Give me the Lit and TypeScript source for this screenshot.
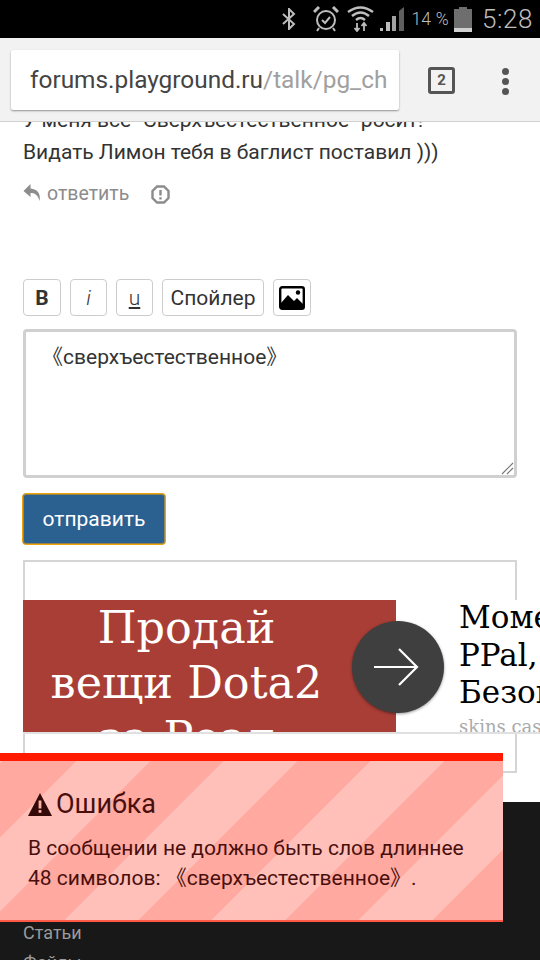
import { LitElement, html, css, svg } from 'lit'
import { customElement } from 'lit/decorators.js'

const warnIcon = svg`<svg class="warn" viewBox="0 0 24 23" width="24" height="23"><path d="M12 0 L24 23 H0 Z" fill="#330a08"/><rect x="10.6" y="7.5" width="2.8" height="8" fill="#ffb0a8"/><rect x="10.6" y="17" width="2.8" height="2.8" fill="#ffb0a8"/></svg>`

@customElement('app-root')
export class AppRoot extends LitElement {
    static styles = css`
        :host {
            display: block;
            position: relative;
            width: 540px;
            height: 960px;
            overflow: hidden;
            background: #fff;
            font-family: Roboto, 'Noto Sans CJK SC', sans-serif;
            color: #333;
        }

        .status {
            position: relative;
            z-index: 2;
            height: 38px;
            background: #000;
            color: #bdbdbd;
            display: flex;
            align-items: center;
            justify-content: flex-end;
            padding-right: 7px;
        }
        .status svg { display: block; }
        .status .bt { margin-right: 17px; }
        .status .alarm { margin-right: 8px; }
        .status .wifi { margin-right: 6px; }
        .status .sig { margin-right: 6px; }
        .pct { font-size: 17.5px; font-weight: 300; margin-right: 5px; letter-spacing: 0.2px; }
        .status .batt { margin-right: 10px; }
        .time { font-size: 26px; font-weight: 300; letter-spacing: 0.6px; }

        .toolbar {
            position: relative;
            z-index: 2;
            height: 84px;
            box-sizing: border-box;
            background: #f2f2f2;
            border-bottom: 1px solid #d0d0d0;
            display: flex;
            align-items: flex-start;
            padding: 12px 0 0 11px;
        }
        .url {
            width: 388px;
            height: 60px;
            box-sizing: border-box;
            background: #fff;
            border-radius: 2px;
            box-shadow: 0 1px 2px rgba(0, 0, 0, 0.4);
            padding: 0 11px 0 19px;
            font-size: 24.4px;
            line-height: 60px;
            color: #444;
            white-space: nowrap;
            overflow: hidden;
        }
        .url span { color: #a0a0a0; }
        .tabs {
            margin: 17px 0 0 29px;
            width: 27px;
            height: 27px;
            box-sizing: border-box;
            border: 3px solid #555;
            border-radius: 3px;
            font-size: 15px;
            font-weight: 700;
            line-height: 21px;
            text-align: center;
            color: #555;
        }
        .dots {
            margin: 18px 0 0 47px;
            display: flex;
            flex-direction: column;
            gap: 3px;
        }
        .dots i {
            width: 7px;
            height: 7px;
            border-radius: 50%;
            background: #555;
        }

        .content { padding: 0 23px; }
        .post {
            margin-top: -18px;
            font-size: 21px;
            line-height: 32px;
            color: #333;
        }
        .post-actions {
            display: flex;
            align-items: center;
            margin-top: 12px;
            height: 26px;
            font-size: 19.5px;
            color: #8c8c8c;
        }
        .post-actions .reply { margin-right: 5px; }
        .post-actions .report { margin: 3px 0 0 22px; }

        .tools {
            display: flex;
            gap: 9px;
            margin-top: 73px;
        }
        .tool {
            height: 37px;
            width: 37px;
            box-sizing: border-box;
            border: 1px solid #ccc;
            border-radius: 4px;
            background: #fff;
            display: flex;
            align-items: center;
            justify-content: center;
            font-size: 21px;
            color: #333;
        }
        .tool.wide { width: 102px; }
        .tool.b { width: 38px; font-weight: 700; }
        .tool.i { font-style: italic; font-weight: 300; }
        .tool.u { text-decoration: underline; font-weight: 300; }
        .tool.pic { width: 38px; }

        .editor {
            position: relative;
            margin-top: 13px;
            height: 149px;
            box-sizing: border-box;
            border: 3px solid #d0d0d0;
            border-radius: 4px;
            padding: 13px 16px;
            font-size: 21px;
            line-height: 24px;
            color: #333;
        }
        .grip {
            position: absolute;
            right: 0;
            bottom: 0;
        }

        .send {
            display: block;
            margin: 15px 0 0 -1px;
            width: 144px;
            height: 52px;
            box-sizing: border-box;
            border: 1px solid #f0a30a;
            box-shadow: inset 0 0 0 1px rgba(240, 163, 10, 0.55);
            border-radius: 4px;
            background: #2b6191;
            font-family: inherit;
            font-size: 21px;
            color: #fff;
        }

        .ad-frame {
            margin-top: 15px;
            height: 213px;
            box-sizing: border-box;
            border: 2px solid #d5d5d5;
            padding-top: 38px;
        }
        .ad {
            position: relative;
            margin-left: -2px;
            width: 517px;
            height: 134px;
            box-sizing: border-box;
            display: flex;
            background: #fff;
            border-bottom: 2px solid #e0e0e0;
            overflow: hidden;
            font-family: 'DejaVu Serif', serif;
        }
        .ad-left {
            width: 373px;
            flex: none;
            background: #a83e36;
            color: #fff;
            font-size: 44.5px;
            line-height: 55px;
            text-align: center;
            padding: 0 46px 0 0;
            box-sizing: border-box;
        }
        .ad-right {
            margin-top: -1px;
            padding: 0 0 0 63px;
            font-size: 31px;
            line-height: 37.5px;
            color: #000;
            white-space: nowrap;
        }
        .ad-right small {
            display: block;
            margin-top: 4px;
            font-size: 18px;
            line-height: 22px;
            color: #aaa;
        }
        .go {
            position: absolute;
            left: 329px;
            top: 21px;
            width: 92px;
            height: 92px;
            border-radius: 50%;
            background: #3f3f3f;
            box-shadow: 0 1px 3px rgba(0, 0, 0, 0.4);
            display: flex;
            align-items: center;
            justify-content: center;
        }
        .go svg { margin-right: 4px; }

        .footer {
            position: absolute;
            left: 0;
            right: 0;
            top: 802px;
            bottom: 0;
            background: #181818;
            padding: 116px 23px 0;
            font-size: 18px;
            line-height: 30px;
            color: #9a9a9a;
        }

        .toast {
            position: absolute;
            left: 0;
            top: 753px;
            width: 503px;
            height: 169px;
            box-sizing: border-box;
            border-top: 8px solid #ff1a00;
            border-bottom: 2px solid #ff5a48;
            padding: 27px 28px 0;
            color: #4a0f0c;
            background: repeating-linear-gradient(
                -45deg,
                #ffa9a1 -2px 50px,
                #ffc0ba 50px 102px
            );
        }
        .toast h3 {
            margin: 0;
            display: flex;
            align-items: center;
            gap: 4px;
            font-size: 27px;
            font-weight: 400;
            line-height: 32px;
        }
        .toast p {
            margin: 13px 0 0;
            font-size: 21px;
            line-height: 30px;
        }
    `

    render() {
        return html`
            <div class="status">
                <svg class="bt" width="14" height="22" viewBox="0 0 14 22" fill="none" stroke="#bdbdbd" stroke-width="2"><path d="M1 6 L12 16 L7 21 V1 L12 6 L1 16"/></svg>
                <svg class="alarm" width="26" height="26" viewBox="0 0 26 26" fill="none" stroke="#bdbdbd"><circle cx="13" cy="14" r="9" stroke-width="2"/><path d="M9 14 L12 17 L17 11" stroke-width="2"/><path d="M1 6 L6 1 M20 1 L25 6" stroke-width="3"/><path d="M6 22 L4 25 M20 22 L22 25" stroke-width="2"/></svg>
                <svg class="wifi" width="27" height="26" viewBox="0 0 27 26" fill="none" stroke="#bdbdbd" stroke-width="2.4"><path d="M1 6 Q13.5 -3 26 6"/><path d="M5 10 Q13.5 3 22 10"/><path d="M9 14 Q13.5 10 18 14"/><path d="M10 17 V25 M7.5 22 L10 25 L12.5 22 M17 25 V17 M14.5 20 L17 17 L19.5 20" stroke-width="1.8"/></svg>
                <svg class="sig" width="25" height="26" viewBox="0 0 25 26" fill="#bdbdbd"><path d="M0 25 h3 v-3 h-3z M6 25 h4 v-9 h-4z" /><path d="M12 25 h4 v-15 h-4z" opacity=".85"/><path d="M19 25 h5 V1 l-5 4z" opacity=".5"/></svg>
                <span class="pct">14 %</span>
                <svg class="batt" width="18" height="25" viewBox="0 0 18 25"><path d="M5 0 h8 v2 h5 v23 h-18 v-23 h5z" fill="#6e6e6e"/><rect y="21" width="18" height="4" fill="#d0d0d0"/></svg>
                <span class="time">5:28</span>
            </div>
            <div class="toolbar">
                <div class="url">forums.playground.ru<span>/talk/pg_ch</span></div>
                <div class="tabs">2</div>
                <div class="dots"><i></i><i></i><i></i></div>
            </div>
            <div class="content">
                <div class="post">
                    У меня все "Сверхъестественное" росит!<br />
                    Видать Лимон тебя в баглист поставил )))
                </div>
                <div class="post-actions">
                    <svg class="reply" width="19" height="18" viewBox="0 0 18 18" fill="#8c8c8c"><path d="M7 0 L0 7 L7 13 V9 C11 9 14 10 16 17 C17.5 10 14 5 7 4.5 Z"/></svg>
                    ответить
                    <svg class="report" width="19" height="19" viewBox="0 0 19 19" fill="none" stroke="#8c8c8c" stroke-width="2.4"><path d="M6 1.5 H13 L17.5 6 V13 L13 17.5 H6 L1.5 13 V6 Z"/><path d="M9.5 5 V10.5 M9.5 12.2 V14.4"/></svg>
                </div>
                <div class="tools">
                    <div class="tool b">B</div>
                    <div class="tool i">i</div>
                    <div class="tool u">u</div>
                    <div class="tool wide">Спойлер</div>
                    <div class="tool pic">
                        <svg width="26" height="24" viewBox="0 0 26 24"><rect x="1.2" y="1.2" width="23.6" height="21.6" rx="2" fill="#fff" stroke="#000" stroke-width="2.4"/><path d="M2 21 V17 L9 9 L15 15 L18 12 L24 18 V22 H2 Z" fill="#000"/><circle cx="19" cy="6.5" r="2.2" fill="#000"/></svg>
                    </div>
                </div>
                <div class="editor">
                    《сверхъестественное》
                    <svg class="grip" width="13" height="13" viewBox="0 0 13 13" stroke="#777" stroke-width="1.2"><path d="M1 12 L12 1 M6 12 L12 6"/></svg>
                </div>
                <button class="send">отправить</button>
                <div class="ad-frame">
                    <div class="ad">
                        <div class="ad-left">Продай<br />вещи Dota2<br />за Реал</div>
                        <div class="ad-right">Моментально<br />PPal, Qiwi<br />Безопасно<small>skins cash</small></div>
                        <div class="go">
                            <svg width="46" height="38" viewBox="0 0 46 38" fill="none" stroke="#fff" stroke-width="2.2"><path d="M1 19 H44 M26 1 L44 19 L26 37"/></svg>
                        </div>
                    </div>
                </div>
            </div>
            <div class="footer">Статьи<br />Файлы</div>
            <div class="toast">
                <h3>${warnIcon}Ошибка</h3>
                <p>В сообщении не должно быть слов длиннее 48 символов: 《сверхъестественное》.</p>
            </div>
        `
    }
}
